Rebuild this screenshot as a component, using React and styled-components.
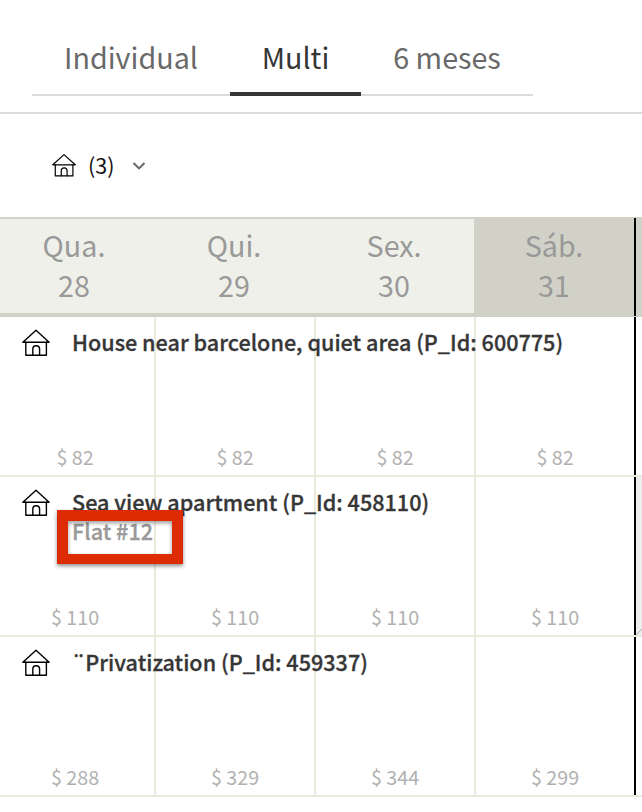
import React from "react";
import styled, { createGlobalStyle } from "styled-components";

const GlobalStyle = createGlobalStyle`
  body {
    margin: 0;
    background: #fff;
    font-family: "Noto Sans CJK SC", "Noto Sans", sans-serif;
  }
`;

const Page = styled.div`
  width: 642px;
  height: 812px;
  overflow: hidden;
  background: #fff;
`;

const TopBar = styled.header`
  display: flex;
  align-items: flex-end;
  height: 96px;
  padding: 0 0 16px 32px;
  border-bottom: 2px solid #dbdbdb;
`;

const Tabs = styled.nav`
  display: flex;
`;

const Tab = styled.button`
  width: ${(props) => props.$width}px;
  height: 74px;
  box-sizing: border-box;
  padding: 0 0 ${(props) => (props.$active ? 1 : 3)}px;
  border: none;
  border-bottom: ${(props) =>
    props.$active ? "4px solid #363638" : "2px solid #dbdbdb"};
  background: none;
  color: ${(props) => (props.$active ? "#363636" : "#696969")};
  font-family: inherit;
  font-size: 28.7px;
  line-height: 60px;
  white-space: nowrap;
`;

const Filter = styled.div`
  display: flex;
  align-items: center;
  height: 103px;
  padding-left: 52px;
`;

const Count = styled.span`
  margin: -2px 18px 0 12px;
  color: #111;
  font-size: 21.5px;
  line-height: 30px;
`;

const Days = styled.div`
  display: flex;
  height: 94px;
  border-top: 2px solid #d1d1c7;
  border-bottom: 4px solid #d1d1c7;
  background: linear-gradient(to right, #eff0e9 474px, #d1d1c7 474px);
`;

const Day = styled.div`
  flex: none;
  width: 160px;
  padding-top: 6px;
  color: #999;
  font-size: 28.7px;
  line-height: 40px;
  text-align: center;

  &:first-child {
    margin-left: -6px;
  }
`;

const MonthEnd = styled.div`
  flex: none;
  width: 2px;
  margin: -1px 0 -3px;
  background: #000;
`;

const Row = styled.section`
  position: relative;
  display: flex;
  height: 158px;
  border-bottom: 2px solid #e9eadc;
`;

const Cell = styled.div`
  display: flex;
  flex: none;
  align-items: flex-end;
  justify-content: center;
  width: 160px;
  box-sizing: border-box;
  padding-bottom: 3px;
  border-right: 2px solid ${(props) => (props.$last ? "#000" : "#e9eadc")};
  color: #b1b1b1;
  font-size: 19.7px;
  line-height: 30px;

  &:first-child {
    margin-left: -4px;
  }
`;

const Blocked = styled.svg`
  flex: none;
  width: 6px;
  height: 158px;
  background: #ededed;
`;

const Property = styled.div`
  position: absolute;
  top: 10px;
  left: 22px;
  display: flex;
  align-items: flex-start;
  gap: 22px;

  svg {
    margin-top: 2px;
  }
`;

const Name = styled.div`
  color: #363636;
  font-size: 21.6px;
  font-weight: 500;
  line-height: 30px;
  white-space: nowrap;
  -webkit-text-stroke: 0.3px;
`;

const Unit = styled(Name)`
  margin-top: -1px;
  color: #999;
`;

const Highlight = styled.div`
  position: absolute;
  top: 33px;
  left: 57px;
  width: 126px;
  height: 54px;
  box-sizing: border-box;
  border: 11px solid #dd2b03;
  border-bottom-width: 10px;
  box-shadow: 0 2px 4px rgba(0, 0, 0, 0.45),
    inset 0 2px 4px rgba(0, 0, 0, 0.4);
`;

const HouseIcon = ({ width = 28, height = 28 }) => (
  <svg
    width={width}
    height={height}
    viewBox="0 0 28 28"
    fill="none"
    stroke="#000"
    strokeWidth="1.4"
    strokeLinejoin="round"
    strokeLinecap="round"
  >
    <path d="M14 1.3 L0.9 13.2 H27.1 Z" />
    <path d="M3.8 13.2 V26.2 H24.4 V13.2" />
    <path d="M10.8 26 V20.2 A3.4 3.4 0 0 1 17.6 20.2 V26" />
  </svg>
);

const Chevron = () => (
  <svg width="14" height="10" viewBox="0 0 14 10" fill="none">
    <path d="M1.5 2 L7 7.4 L12.5 2" stroke="#666" strokeWidth="2.1" />
  </svg>
);

const tabs = [
  { label: "Individual", width: 198 },
  { label: "Multi", width: 131, active: true },
  { label: "6 meses", width: 172 },
];

const days = [
  { name: "Qua.", date: 28 },
  { name: "Qui.", date: 29 },
  { name: "Sex.", date: 30 },
  { name: "Sáb.", date: 31 },
];

const properties = [
  {
    name: "House near barcelone, quiet area (P_Id: 600775)",
    prices: [82, 82, 82, 82],
  },
  {
    name: "Sea view apartment (P_Id: 458110)",
    unit: "Flat #12",
    prices: [110, 110, 110, 110],
    blocked: true,
  },
  { name: "¨Privatization (P_Id: 459337)", prices: [288, 329, 344, 299] },
];

const App = () => {
  return (
    <Page>
      <GlobalStyle />
      <TopBar>
        <Tabs>
          {tabs.map((tab) => (
            <Tab key={tab.label} $width={tab.width} $active={tab.active}>
              {tab.label}
            </Tab>
          ))}
        </Tabs>
      </TopBar>
      <Filter>
        <HouseIcon width={24} height={25} />
        <Count>(3)</Count>
        <Chevron />
      </Filter>
      <Days>
        {days.map((day) => (
          <Day key={day.date}>
            <div>{day.name}</div>
            <div>{day.date}</div>
          </Day>
        ))}
        <MonthEnd />
      </Days>
      {properties.map((property) => (
        <Row key={property.name}>
          {property.prices.map((price, i) => (
            <Cell key={i} $last={i === 3}>
              $ {price}
            </Cell>
          ))}
          {property.blocked && (
            <Blocked viewBox="0 0 6 158">
              <path d="M0 158 L6 152" stroke="#aaa" strokeWidth="1" />
            </Blocked>
          )}
          <Property>
            <HouseIcon />
            <div>
              <Name>{property.name}</Name>
              {property.unit && <Unit>{property.unit}</Unit>}
            </div>
          </Property>
          {property.unit && <Highlight />}
        </Row>
      ))}
    </Page>
  );
};

export default App;
